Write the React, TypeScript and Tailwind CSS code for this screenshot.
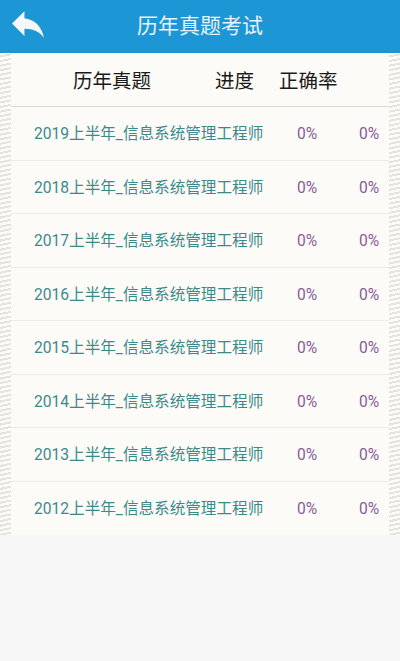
import React from 'react';

const years = [2019, 2018, 2017, 2016, 2015, 2014, 2013, 2012];

function BackIcon() {
  return (
    <svg viewBox="3 5 18 15" className="w-[32px] h-[27px]" fill="#f4f8fb">
      <path d="M10 9V5l-7 7 7 7v-4.1c5 0 8.5 1.6 11 5.1-1-5-4-10-11-11z" />
    </svg>
  );
}

function Edge() {
  return (
    <div className="w-[11px] shrink-0 bg-[repeating-linear-gradient(168deg,transparent_0px,transparent_2.5px,#dcd8d0_2.5px,#dcd8d0_4.5px)] opacity-70" />
  );
}

export default function App() {
  return (
    <div
      className="w-[400px] h-[661px] bg-[#f7f7f7] flex flex-col"
      style={{ fontFamily: "Roboto, 'Noto Sans CJK SC', sans-serif" }}
    >
      {/* Title bar */}
      <div className="h-[53px] bg-[#1c96d4] flex items-center relative shrink-0">
        <button className="absolute left-[12px] top-[11px]">
          <BackIcon />
        </button>
        <h1 className="w-full text-center text-[21px] text-[#eaf3f8]">历年真题考试</h1>
      </div>

      {/* Table */}
      <div className="flex bg-[#fdfbf7]">
        <Edge />
        <div className="flex-1 flex flex-col">
          <div className="h-[54px] flex items-center pt-[4px] pl-[62px] text-[19.5px] text-[#1a1a1a] border-b border-[#dedad3]">
            <span className="w-[142px]">历年真题</span>
            <span className="w-[64px]">进度</span>
            <span>正确率</span>
          </div>
          {years.map((y, i) => (
            <div
              key={y}
              className={`h-[53.5px] flex items-center pt-[3px] text-[15.6px] ${
                i < years.length - 1 ? 'border-b border-[#efebe4]' : ''
              }`}
            >
              <span className="w-[286px] pl-[23px] text-[#3a8a8c]">{y}上半年_信息系统管理工程师</span>
              <span className="w-[62px] text-[#8a5c99]">0%</span>
              <span className="text-[#8a5c99]">0%</span>
            </div>
          ))}
        </div>
        <Edge />
      </div>
    </div>
  );
}
